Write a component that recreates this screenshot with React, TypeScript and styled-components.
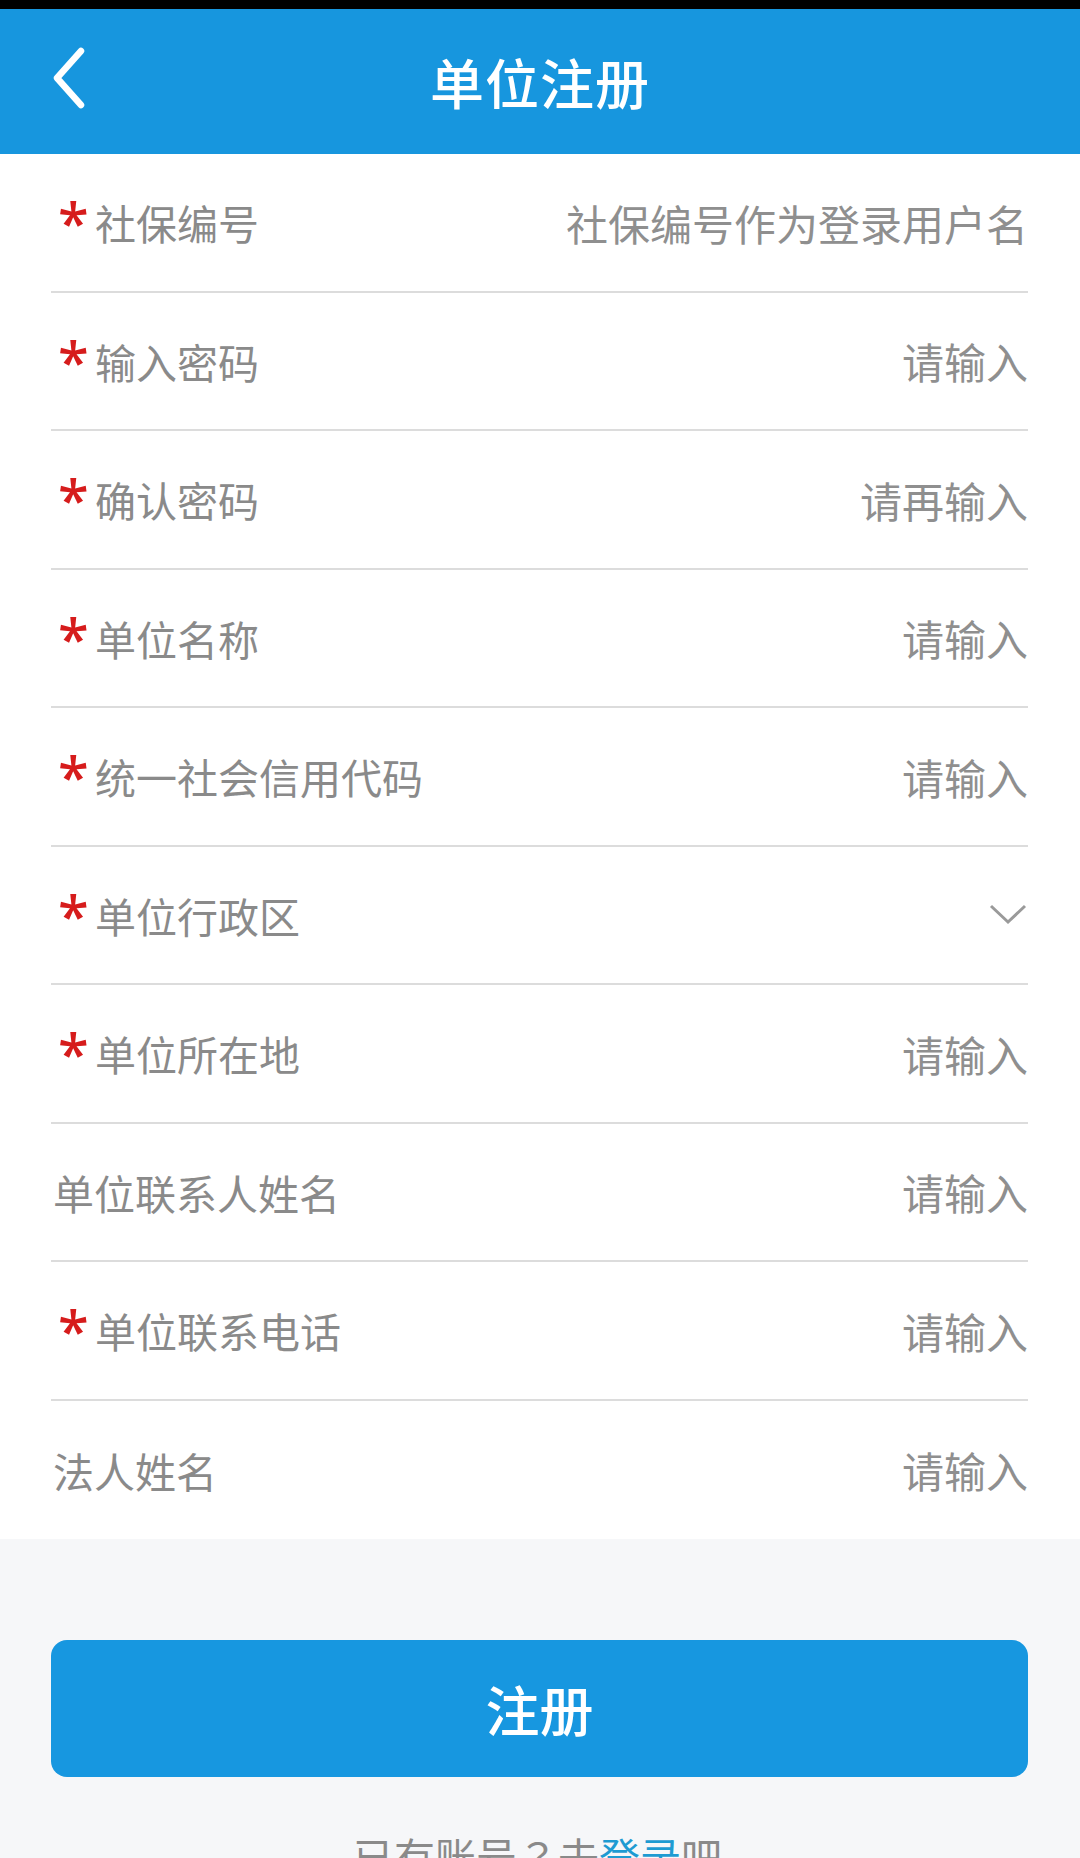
import React from 'react'
import styled, { createGlobalStyle } from 'styled-components'

const GlobalStyle = createGlobalStyle`
  html, body {
    margin: 0;
    padding: 0;
    background: #f6f7f9;
    font-family: "Noto Sans CJK SC", "Noto Sans", sans-serif;
  }
`

const Page = styled.div`
  width: 1080px;
  height: 1858px;
  overflow: hidden;
  background: #f6f7f9;
`

const StatusBar = styled.div`
  height: 9px;
  background: #000;
`

const Header = styled.div`
  position: relative;
  height: 145px;
  background: #1796de;
  display: flex;
  align-items: center;
  justify-content: center;
`

const BackButton = styled.div`
  position: absolute;
  left: 50px;
  top: 38px;
  width: 40px;
  height: 64px;
  display: flex;
  align-items: center;
`

const Title = styled.div`
  color: #fff;
  font-size: 54px;
  font-weight: 500;
  line-height: 1;
  letter-spacing: 1px;
`

const Form = styled.div`
  background: #fff;
  padding: 0 52px 0 51px;
`

const Row = styled.div<{ last?: boolean }>`
  height: 138.5px;
  box-sizing: border-box;
  display: flex;
  align-items: center;
  justify-content: space-between;
  border-bottom: ${({ last }) => (last ? 'none' : '2.5px solid #dcdcdc')};
`

const Label = styled.div`
  display: flex;
  align-items: center;
  font-size: 41px;
  color: #8a8a8a;
  padding-left: 2px;
`

const Star = styled.span`
  width: 42px;
  padding-left: 5px;
  box-sizing: border-box;
  color: #d61c1c;
  font-family: "Noto Sans", sans-serif;
  font-weight: 500;
  font-size: 56px;
  line-height: 1;
  align-self: flex-start;
  margin-top: 1px;
  height: 30px;
`

const Placeholder = styled.div`
  font-size: 42px;
  color: #8f8f8f;
`

const Chevron = styled.div`
  display: flex;
  margin-top: -2px;
  margin-right: 1px;
`

const Actions = styled.div`
  padding: 101px 52px 0 51px;
`

const SubmitButton = styled.div`
  height: 137px;
  border-radius: 16px;
  background: #1797e0;
  color: #fff;
  font-size: 54px;
  font-weight: 500;
  display: flex;
  align-items: center;
  justify-content: center;
`

const Footer = styled.div`
  margin-top: 54px;
  padding-left: 353px;
  font-size: 41px;
  color: #8a8a8a;
  line-height: 1.2;
  white-space: nowrap;
`

const Punct = styled.span`
  font-family: "Noto Sans CJK TC", sans-serif;
`

const LoginLink = styled.span`
  color: #1e9bd2;
`

type Field = {
  label: string
  required: boolean
  hint?: string
  select?: boolean
}

const fields: Field[] = [
  { label: '社保编号', required: true, hint: '社保编号作为登录用户名' },
  { label: '输入密码', required: true, hint: '请输入' },
  { label: '确认密码', required: true, hint: '请再输入' },
  { label: '单位名称', required: true, hint: '请输入' },
  { label: '统一社会信用代码', required: true, hint: '请输入' },
  { label: '单位行政区', required: true, select: true },
  { label: '单位所在地', required: true, hint: '请输入' },
  { label: '单位联系人姓名', required: false, hint: '请输入' },
  { label: '单位联系电话', required: true, hint: '请输入' },
  { label: '法人姓名', required: false, hint: '请输入' },
]

export default function App() {
  return (
    <Page>
      <GlobalStyle />
      <StatusBar />
      <Header>
        <BackButton>
          <svg width="40" height="64" viewBox="0 0 40 64">
            <polyline
              points="31,4 7,31 31,58"
              fill="none"
              stroke="#fff"
              strokeWidth="6.5"
              strokeLinecap="round"
              strokeLinejoin="round"
            />
          </svg>
        </BackButton>
        <Title>单位注册</Title>
      </Header>
      <Form>
        {fields.map((f, i) => (
          <Row key={f.label} last={i === fields.length - 1}>
            <Label>
              {f.required && <Star>*</Star>}
              {f.label}
            </Label>
            {f.select ? (
              <Chevron>
                <svg width="38" height="22" viewBox="0 0 38 22">
                  <polyline
                    points="2,3 19,19 36,3"
                    fill="none"
                    stroke="#9a9a9a"
                    strokeWidth="3"
                  />
                </svg>
              </Chevron>
            ) : (
              <Placeholder>{f.hint}</Placeholder>
            )}
          </Row>
        ))}
      </Form>
      <Actions>
        <SubmitButton>注册</SubmitButton>
      </Actions>
      <Footer>
        已有账号<Punct>？</Punct>去<LoginLink>登录</LoginLink>吧
      </Footer>
    </Page>
  )
}
